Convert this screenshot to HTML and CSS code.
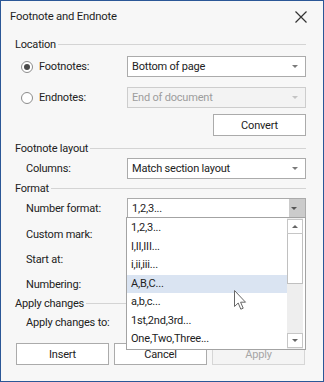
FILE: index.html
```html
<!DOCTYPE html>
<html lang="en">
<head>
    <meta charset="UTF-8">
    <title>Footnote and Endnote</title>
    <link rel="stylesheet" href="styles.css">
</head>
<body>
    <div class="window">
        <div class="titlebar">
            <span class="title">Footnote and Endnote</span>
            <svg class="close" width="12" height="12" viewBox="0 0 12 12">
                <path d="M0.5 0.5 L11.5 11.5 M11.5 0.5 L0.5 11.5" stroke="#333" stroke-width="1.2" fill="none"/>
            </svg>
        </div>

        <div class="content">
            <div class="group-head gh-location"><span>Location</span><i></i></div>

            <div class="row row-footnotes">
                <label class="radio"><span class="circle checked"></span>Footnotes:</label>
                <div class="combo">Bottom of page<span class="arrow"></span></div>
            </div>
            <div class="row row-endnotes">
                <label class="radio"><span class="circle"></span>Endnotes:</label>
                <div class="combo disabled">End of document<span class="arrow"></span></div>
            </div>
            <div class="row row-convert">
                <button class="btn">Convert</button>
            </div>

            <div class="group-head gh-layout"><span>Footnote layout</span><i></i></div>
            <div class="row row-field row-columns">
                <label>Columns:</label>
                <div class="combo">Match section layout<span class="arrow"></span></div>
            </div>

            <div class="group-head gh-format"><span>Format</span><i></i></div>
            <div class="row row-field row-number">
                <label>Number format:</label>
                <div class="combo open">1,2,3...<span class="drop-btn"><span class="arrow"></span></span></div>
            </div>
            <div class="row row-field row-mark"><label>Custom mark:</label></div>
            <div class="row row-field row-start"><label>Start at:</label></div>
            <div class="row row-field row-numbering"><label>Numbering:</label></div>

            <div class="group-head gh-apply"><span>Apply changes</span><i></i></div>
            <div class="row row-field row-applyto"><label>Apply changes to:</label></div>

            <div class="buttons">
                <button class="btn">Insert</button>
                <button class="btn">Cancel</button>
                <button class="btn" disabled>Apply</button>
            </div>
        </div>

        <div class="popup">
            <ul class="items">
                <li>1,2,3...</li>
                <li>I,II,III...</li>
                <li>i,ii,iii...</li>
                <li class="hover">A,B,C...</li>
                <li>a,b,c...</li>
                <li>1st,2nd,3rd...</li>
                <li>One,Two,Three...</li>
            </ul>
            <div class="scrollbar">
                <div class="sb-btn"><span class="up"></span></div>
                <div class="sb-thumb"></div>
                <div class="sb-track"></div>
                <div class="sb-btn"><span class="down"></span></div>
            </div>
        </div>

        <svg class="cursor" width="13" height="21" viewBox="0 0 13 21">
            <path d="M0.5 0.5 L0.5 16.5 L4.2 13 L6.8 19.2 L9.2 18.2 L6.6 12.2 L11.5 12.2 Z" fill="#fff" stroke="#666" stroke-width="1"/>
        </svg>
    </div>
</body>
</html>
```

FILE: styles.css
```css
body {
    margin: 0;
    font-family: Roboto, "Noto Sans", sans-serif;
    font-size: 11px;
    letter-spacing: -0.2px;
    color: #222;
}

.window {
    position: relative;
    width: 324px;
    height: 382px;
    box-sizing: border-box;
    border: 1px solid #2b5797;
    background: #f7f7f7;
    overflow: hidden;
}

.titlebar {
    height: 30px;
    display: flex;
    align-items: center;
    justify-content: space-between;
    padding: 0 16px 0 9px;
}

.title {
    font-size: 11.3px;
    color: #1e1e1e;
}

.close {
    margin-top: 1px;
}

.content {
    padding: 0 17px 0 14px;
}

.group-head {
    display: flex;
    align-items: center;
    height: 18px;
}

.group-head i {
    flex: 1;
    height: 1px;
    background: #d4d4d4;
    margin-left: 2px;
}

.gh-location { margin-top: 4px; }
.gh-layout { margin-top: 3px; }
.gh-apply { height: 17px; }

.row {
    display: flex;
    align-items: center;
    height: 21px;
}

.row-footnotes { margin-top: 3px; padding-left: 6px; }
.row-endnotes { margin-top: 10px; padding-left: 6px; }
.row-convert { margin-top: 6px; height: 22px; justify-content: flex-end; }
.row-columns { margin-top: 1px; }
.row-number { margin-top: 1px; }
.row-mark { margin-top: 5px; }
.row-start, .row-numbering { margin-top: 4px; }

.row-field {
    padding-left: 11px;
}

.row-field label {
    width: 101px;
}

.radio {
    display: flex;
    align-items: center;
    width: 106px;
}

.circle {
    width: 12px;
    height: 12px;
    box-sizing: border-box;
    border: 1px solid #8c8c8c;
    border-radius: 50%;
    background: #fff;
    margin-right: 6px;
    display: flex;
    align-items: center;
    justify-content: center;
}

.circle.checked::after {
    content: "";
    width: 6px;
    height: 6px;
    border-radius: 50%;
    background: #4a4a4a;
}

.combo {
    flex: 1;
    height: 100%;
    box-sizing: border-box;
    border: 1px solid #ababab;
    background: #fff;
    padding-left: 4px;
    display: flex;
    align-items: center;
    justify-content: space-between;
}

.combo .arrow {
    margin-right: 7px;
}

.arrow {
    width: 0;
    height: 0;
    border-left: 3px solid transparent;
    border-right: 3px solid transparent;
    border-top: 3px solid #7a7a7a;
}

.combo.disabled {
    background: #f3f3f3;
    border-color: #cdcdcd;
    color: #9d9d9d;
}

.combo.disabled .arrow {
    border-top-color: #c4c4c4;
}

.drop-btn {
    width: 16px;
    height: 100%;
    background: #cbcbcb;
    display: flex;
    align-items: center;
    justify-content: center;
}

.drop-btn .arrow {
    border-top-color: #555;
}

.btn {
    width: 93px;
    height: 22px;
    box-sizing: border-box;
    border: 1px solid #ababab;
    background: #fff;
    font-family: inherit;
    font-size: 11px;
    letter-spacing: -0.2px;
    color: #222;
    padding: 0;
}

.btn:disabled {
    background: #f4f4f4;
    border-color: #d6d6d6;
    color: #a6a6a6;
}

.buttons {
    margin: 10px 0 0 1px;
    width: 289px;
    display: grid;
    grid-template-columns: repeat(3, 1fr);
    gap: 5px;
}

.popup {
    position: absolute;
    left: 125px;
    top: 216px;
    width: 180px;
    height: 133px;
    box-sizing: border-box;
    border: 1px solid #a3a3a3;
    background: #fff;
    display: flex;
    padding-right: 2px;
}

.items {
    list-style: none;
    margin: 0;
    padding: 1px 0 0 0;
    width: 160px;
}

.items li {
    height: 18.57px;
    line-height: 18.57px;
    padding-left: 4px;
}

.items li.hover {
    background: #dae4f2;
}

.scrollbar {
    width: 16px;
    background: #eeeeee;
    display: flex;
    flex-direction: column;
    padding: 1px 0;
}

.sb-btn {
    height: 15px;
    box-sizing: border-box;
    border: 1px solid #c6c6c6;
    background: #fff;
    display: flex;
    align-items: center;
    justify-content: center;
}

.sb-thumb {
    height: 50px;
    box-sizing: border-box;
    border: 1px solid #c0c0c0;
    border-top: none;
    background: #fff;
}

.sb-track {
    flex: 1;
}

.up, .down {
    width: 0;
    height: 0;
    border-left: 3px solid transparent;
    border-right: 3px solid transparent;
}

.up { border-bottom: 3px solid #666; }
.down { border-top: 3px solid #666; }

.cursor {
    position: absolute;
    left: 233px;
    top: 289px;
}
```
